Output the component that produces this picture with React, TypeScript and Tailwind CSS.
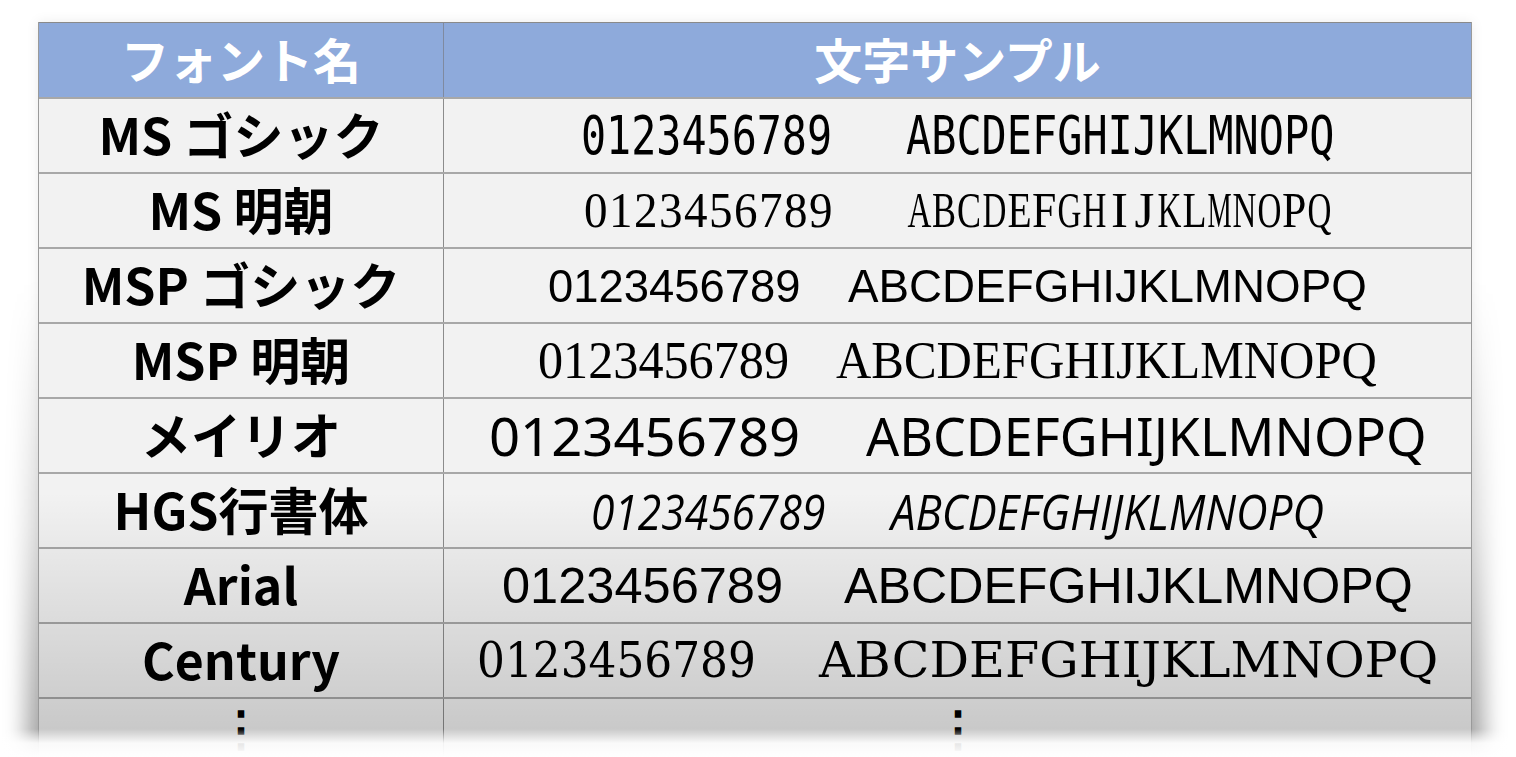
import React, { useLayoutEffect, useRef, useState } from "react";

type FitProps = { w: number; className: string; children: React.ReactNode };

function Fit({ w, className, children }: FitProps) {
  const ref = useRef<HTMLSpanElement>(null);
  const [s, setS] = useState(1);
  useLayoutEffect(() => {
    const measure = () => {
      if (ref.current) {
        const nw = ref.current.offsetWidth;
        if (nw) setS(w / nw);
      }
    };
    measure();
    if (document.fonts && document.fonts.ready) document.fonts.ready.then(measure);
  }, [w]);
  return (
    <span className="inline-block whitespace-nowrap" style={{ width: w }}>
      <span
        ref={ref}
        className={"inline-block origin-left whitespace-nowrap " + className}
        style={{ transform: `scaleX(${s})` }}
      >
        {children}
      </span>
    </span>
  );
}

function Cell({ ch, max }: { ch: string; max: number }) {
  const ref = useRef<HTMLSpanElement>(null);
  const [s, setS] = useState(1);
  useLayoutEffect(() => {
    const measure = () => {
      if (ref.current) {
        const nw = ref.current.offsetWidth;
        if (nw) setS(Math.min(1, max / nw));
      }
    };
    measure();
    if (document.fonts && document.fonts.ready) document.fonts.ready.then(measure);
  }, [max]);
  return (
    <span className="inline-flex w-[25px] justify-center overflow-visible">
      <span ref={ref} className="inline-block origin-center" style={{ transform: `scaleX(${s})` }}>
        {ch}
      </span>
    </span>
  );
}

function Cells({ text, className }: { text: string; className: string }) {
  return (
    <span className={"inline-flex whitespace-nowrap " + className}>
      {text.split("").map((c, i) => (
        <Cell key={i} ch={c} max={24} />
      ))}
    </span>
  );
}

type Row = { name: string; font: string; gap: string; dw: number; lw: number; cells?: boolean };

const rows: Row[] = [
  { name: "MS ゴシック", font: "font-['DejaVu_Sans_Mono'] text-[53px]", gap: "gap-[74px]", dw: 251, lw: 428 },
  { name: "MS 明朝", font: "font-['Liberation_Serif'] text-[51px]", gap: "gap-[74px]", dw: 250, lw: 425, cells: true },
  { name: "MSP ゴシック", font: "font-['Liberation_Sans'] text-[47px]", gap: "gap-[48px]", dw: 252, lw: 519 },
  { name: "MSP 明朝", font: "font-['Liberation_Serif'] text-[52px]", gap: "gap-[47px]", dw: 251, lw: 541 },
  { name: "メイリオ", font: "font-['Noto_Sans'] text-[53px]", gap: "gap-[66px]", dw: 311, lw: 561 },
  { name: "HGS行書体", font: "font-['Open_Sans'] italic font-medium text-[50px]", gap: "gap-[66px]", dw: 234, lw: 433 },
  { name: "Arial", font: "font-['Liberation_Sans'] text-[50px]", gap: "gap-[61px]", dw: 281, lw: 569 },
  { name: "Century", font: "font-['DejaVu_Serif'] text-[49px]", gap: "gap-[63px]", dw: 279, lw: 619 },
];

export default function App() {
  return (
    <div className="relative w-[1516px] h-[757px] overflow-hidden bg-white pt-[22px] pl-[38px]">
      <div className="relative w-[1434px]">
        <div className="absolute left-0 right-0 top-0 bottom-0 shadow-[0_0_12px_rgba(0,0,0,0.08)]" />
        <div className="absolute -left-[14px] -right-[14px] top-[260px] bottom-0 bg-gradient-to-b from-[rgba(0,0,0,0)] via-[rgba(0,0,0,0.12)] to-[rgba(0,0,0,0.34)] blur-[10px]" />
        <div className="relative border-x border-[#9a9a9a] font-['Noto_Sans_CJK_JP',sans-serif]">
          <div className="flex h-[75px] bg-[#8eaadb] border-t border-[#8a8a8a]">
            <div className="w-[405px] shrink-0 flex items-center justify-center border-r border-[#7f8aa0] text-white font-bold text-[48px] leading-none pb-[4px]">
              フォント名
            </div>
            <div className="flex-1 flex items-center justify-center text-white font-bold text-[48px] leading-none pb-[4px]">
              文字サンプル
            </div>
          </div>
          {rows.map((r) => (
            <div key={r.name} className="flex h-[75px] bg-[#f2f2f2] border-t-2 border-[#a8a8a8]">
              <div className="w-[405px] shrink-0 flex items-center justify-center border-r border-[#8c8c8c] text-black font-bold text-[50px] leading-none pb-[6px]">
                {r.name}
              </div>
              <div className={"flex-1 flex items-center justify-center leading-none text-black " + r.gap}>
                {r.cells ? (
                  <>
                    <Cells text="0123456789" className={r.font} />
                    <Cells text="ABCDEFGHIJKLMNOPQ" className={r.font} />
                  </>
                ) : (
                  <>
                    <Fit w={r.dw} className={r.font}>0123456789</Fit>
                    <Fit w={r.lw} className={r.font}>ABCDEFGHIJKLMNOPQ</Fit>
                  </>
                )}
              </div>
            </div>
          ))}
          <div className="flex h-[75px] bg-[#f2f2f2] border-t-2 border-[#a8a8a8]">
            <div className="w-[405px] shrink-0 flex items-start justify-center border-r border-[#8c8c8c] text-black font-bold text-[48px] leading-none pt-[2px]">
              ⋮
            </div>
            <div className="flex-1 flex items-start justify-center text-black font-bold text-[48px] leading-none pt-[2px]">
              ⋮
            </div>
          </div>
          <div className="absolute left-0 right-0 top-[470px] bottom-0 bg-gradient-to-b from-[rgba(0,0,0,0)] to-[rgba(0,0,0,0.2)]" />
        </div>
      </div>
      <div className="absolute left-0 right-0 bottom-0 h-[28px] bg-gradient-to-b from-[rgba(255,255,255,0)] via-[rgba(255,255,255,0.9)] to-white" />
    </div>
  );
}
